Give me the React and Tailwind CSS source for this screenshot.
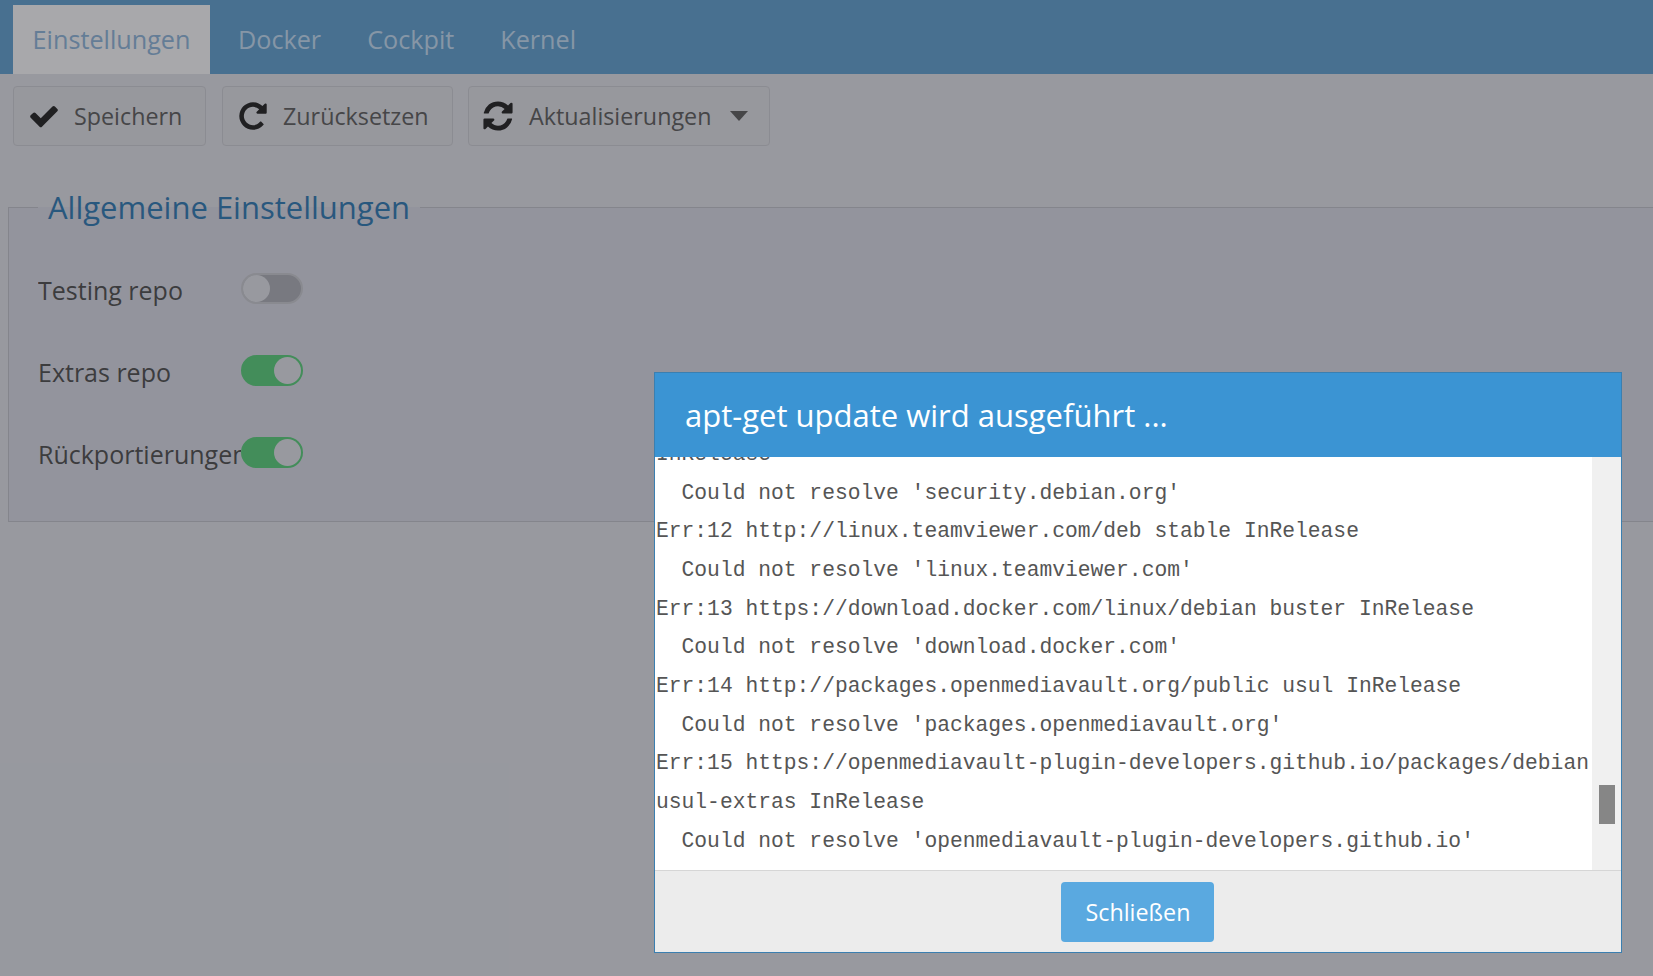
import React from 'react';

const tabs = ['Einstellungen', 'Docker', 'Cockpit', 'Kernel'];

const settings = [
  { label: 'Testing repo', on: false },
  { label: 'Extras repo', on: true },
  { label: 'Rückportierungen', on: true },
];

const logLines = [
  'InRelease',
  "  Could not resolve 'security.debian.org'",
  'Err:12 http://linux.teamviewer.com/deb stable InRelease',
  "  Could not resolve 'linux.teamviewer.com'",
  'Err:13 https://download.docker.com/linux/debian buster InRelease',
  "  Could not resolve 'download.docker.com'",
  'Err:14 http://packages.openmediavault.org/public usul InRelease',
  "  Could not resolve 'packages.openmediavault.org'",
  'Err:15 https://openmediavault-plugin-developers.github.io/packages/debian',
  'usul-extras InRelease',
  "  Could not resolve 'openmediavault-plugin-developers.github.io'",
];

// Font Awesome 4 glyphs, the fa5 ones are too thin here
const CHECK = 'M1671 566q0 40-28 68l-724 724-136 136q-28 28-68 28t-68-28l-136-136-362-362q-28-28-28-68t28-68l136-136q28-28 68-28t68 28l294 295 656-657q28-28 68-28t68 28l136 136q28 28 28 68z';
const REPEAT = 'M1664 256v448q0 26-19 45t-45 19h-448q-42 0-59-40-17-39 14-69l138-138q-148-137-349-137-104 0-198.500 40.500t-163.500 109.500-109.500 163.500-40.500 198.500 40.500 198.500 109.500 163.500 163.500 109.500 198.500 40.500q119 0 225-52t179-147q7-10 23-12 15 0 25 9l137 138q9 8 9.500 20.500t-7.500 22.500q-109 132-264 204.500t-327 72.500q-156 0-298-61t-245-164-164-245-61-298 61-298 164-245 245-164 298-61q147 0 284.500 55.500t244.500 156.500l130-129q29-31 70-14 39 17 39 59z';
const REFRESH = 'M1639 1056q0 5-1 7-64 268-268 434.500t-478 166.500q-146 0-282.500-55t-243.500-157l-129 129q-19 19-45 19t-45-19-19-45v-448q0-26 19-45t45-19h448q26 0 45 19t19 45-19 45l-137 137q71 66 161 102t187 36q134 0 250-65t186-179q11-17 53-117 8-23 30-23h192q13 0 22.500 9.500t9.500 22.500zm25-800v448q0 26-19 45t-45 19h-448q-26 0-45-19t-19-45 19-45l138-138q-148-137-349-137-134 0-250 65t-186 179q-11 17-53 117-8 23-30 23h-199q-13 0-22.500-9.500t-9.500-22.500v-7q65-268 270-434.500t480-166.500q146 0 284 55.500t245 156.500l130-129q19-19 45-19t45 19 19 45z';

function Glyph({ d, className }) {
  return (
    <svg viewBox="0 0 1792 1792" className={`shrink-0 fill-black ${className}`}>
      <path d={d} />
    </svg>
  );
}

function ToolButton({ icon, label, caret, className }) {
  return (
    <button className={`h-[60px] flex items-center bg-[#d9dae0] border border-[#c4c5cc] rounded-[4px] text-[#454545] text-[23.3px] ${className}`}>
      {icon}
      <span>{label}</span>
      {caret && <span className="ml-[19px] w-0 h-0 border-x-[9px] border-x-transparent border-t-[10px] border-t-[#454545]"></span>}
    </button>
  );
}

function Toggle({ on }) {
  return (
    <div className={`w-[62px] h-[31px] shrink-0 rounded-full border-2 flex items-center ${on ? 'bg-[#40c666] border-[#40c666] justify-end' : 'bg-[#a0a2ab] border-[#c0c2c8] justify-start'}`}>
      <div className="w-[27px] h-[27px] rounded-full bg-[#dadce3]"></div>
    </div>
  );
}

export default function App() {
  return (
    <div className="relative h-[976px] w-[1653px] overflow-hidden bg-[#dadce3] font-['Open_Sans',sans-serif]">
      <nav className="h-[74px] bg-[#4a92c8] flex items-end pl-[13px]">
        {tabs.map((tab, i) => (
          <div
            key={tab}
            className={`h-[69px] flex items-center text-[25.2px] ${i === 0 ? 'w-[197px] justify-center bg-[#f7f7f9] text-[#7ca9d4]' : 'text-[#bad7f0] ml-[28px] mr-[18px]'}`}
          >
            {tab}
          </div>
        ))}
      </nav>

      <div className="flex gap-[16px] pl-[13px] pt-[12px]">
        <ToolButton className="w-[193px] pl-[14px]" icon={<Glyph d={CHECK} className="w-[32px] h-[32px] mr-[14px]" />} label="Speichern" />
        <ToolButton className="w-[231px] pl-[14px]" icon={<Glyph d={REPEAT} className="w-[32px] h-[32px] mr-[14px]" />} label="Zurücksetzen" />
        <ToolButton className="w-[302px] pl-[12px] -ml-px" icon={<Glyph d={REFRESH} className="w-[34px] h-[34px] mr-[14px]" />} label="Aktualisierungen" caret />
      </div>

      <fieldset className="mt-[39px] ml-[8px] -mr-[20px] h-[337px] border border-[#b6b8c2] bg-[#d2d3e0] pl-[29px]">
        <legend className="px-[10px] text-[31px] leading-[44px] text-[#0f66a8]">Allgemeine Einstellungen</legend>
        <div className="flex flex-col gap-[51px] pt-[44px]">
          {settings.map((s) => (
            <div key={s.label} className="flex items-center h-[31px]">
              <span className="w-[203px] whitespace-nowrap overflow-hidden text-[25px] text-[#333] pt-[4px]">{s.label}</span>
              <Toggle on={s.on} />
            </div>
          ))}
        </div>
      </fieldset>

      {/* dimmed backdrop */}
      <div className="absolute inset-0 bg-[#46474c]/45"></div>

      {/* apt-get dialog */}
      <div className="absolute left-[654px] top-[372px] w-[968px] h-[581px] border border-[#3b7fb0] flex flex-col bg-white">
        <div className="h-[84px] shrink-0 bg-[#3b94d3] flex items-center pl-[30px] text-white text-[31px]">
          apt-get update wird ausgeführt ...
        </div>
        <div className="h-[413px] shrink-0 flex">
          <div className="flex-1 overflow-hidden">
            <pre className="-mt-[22px] pl-px font-['Liberation_Mono',monospace] text-[21.3px] leading-[38.65px] text-[#555]">
              {logLines.join('\n')}
            </pre>
          </div>
          <div className="w-[29px] bg-[#f0f0f0] pt-[328px] pl-[7px]">
            <div className="w-[16px] h-[39px] bg-[#868686]"></div>
          </div>
        </div>
        <div className="flex-1 bg-[#ececec] border-t border-[#d6d6d6] flex items-center justify-center">
          <button className="w-[153px] h-[60px] mr-[2px] pl-[2px] pt-[2px] rounded-[4px] bg-[#5aa9e0] text-white text-[23.3px]">Schließen</button>
        </div>
      </div>
    </div>
  );
}
